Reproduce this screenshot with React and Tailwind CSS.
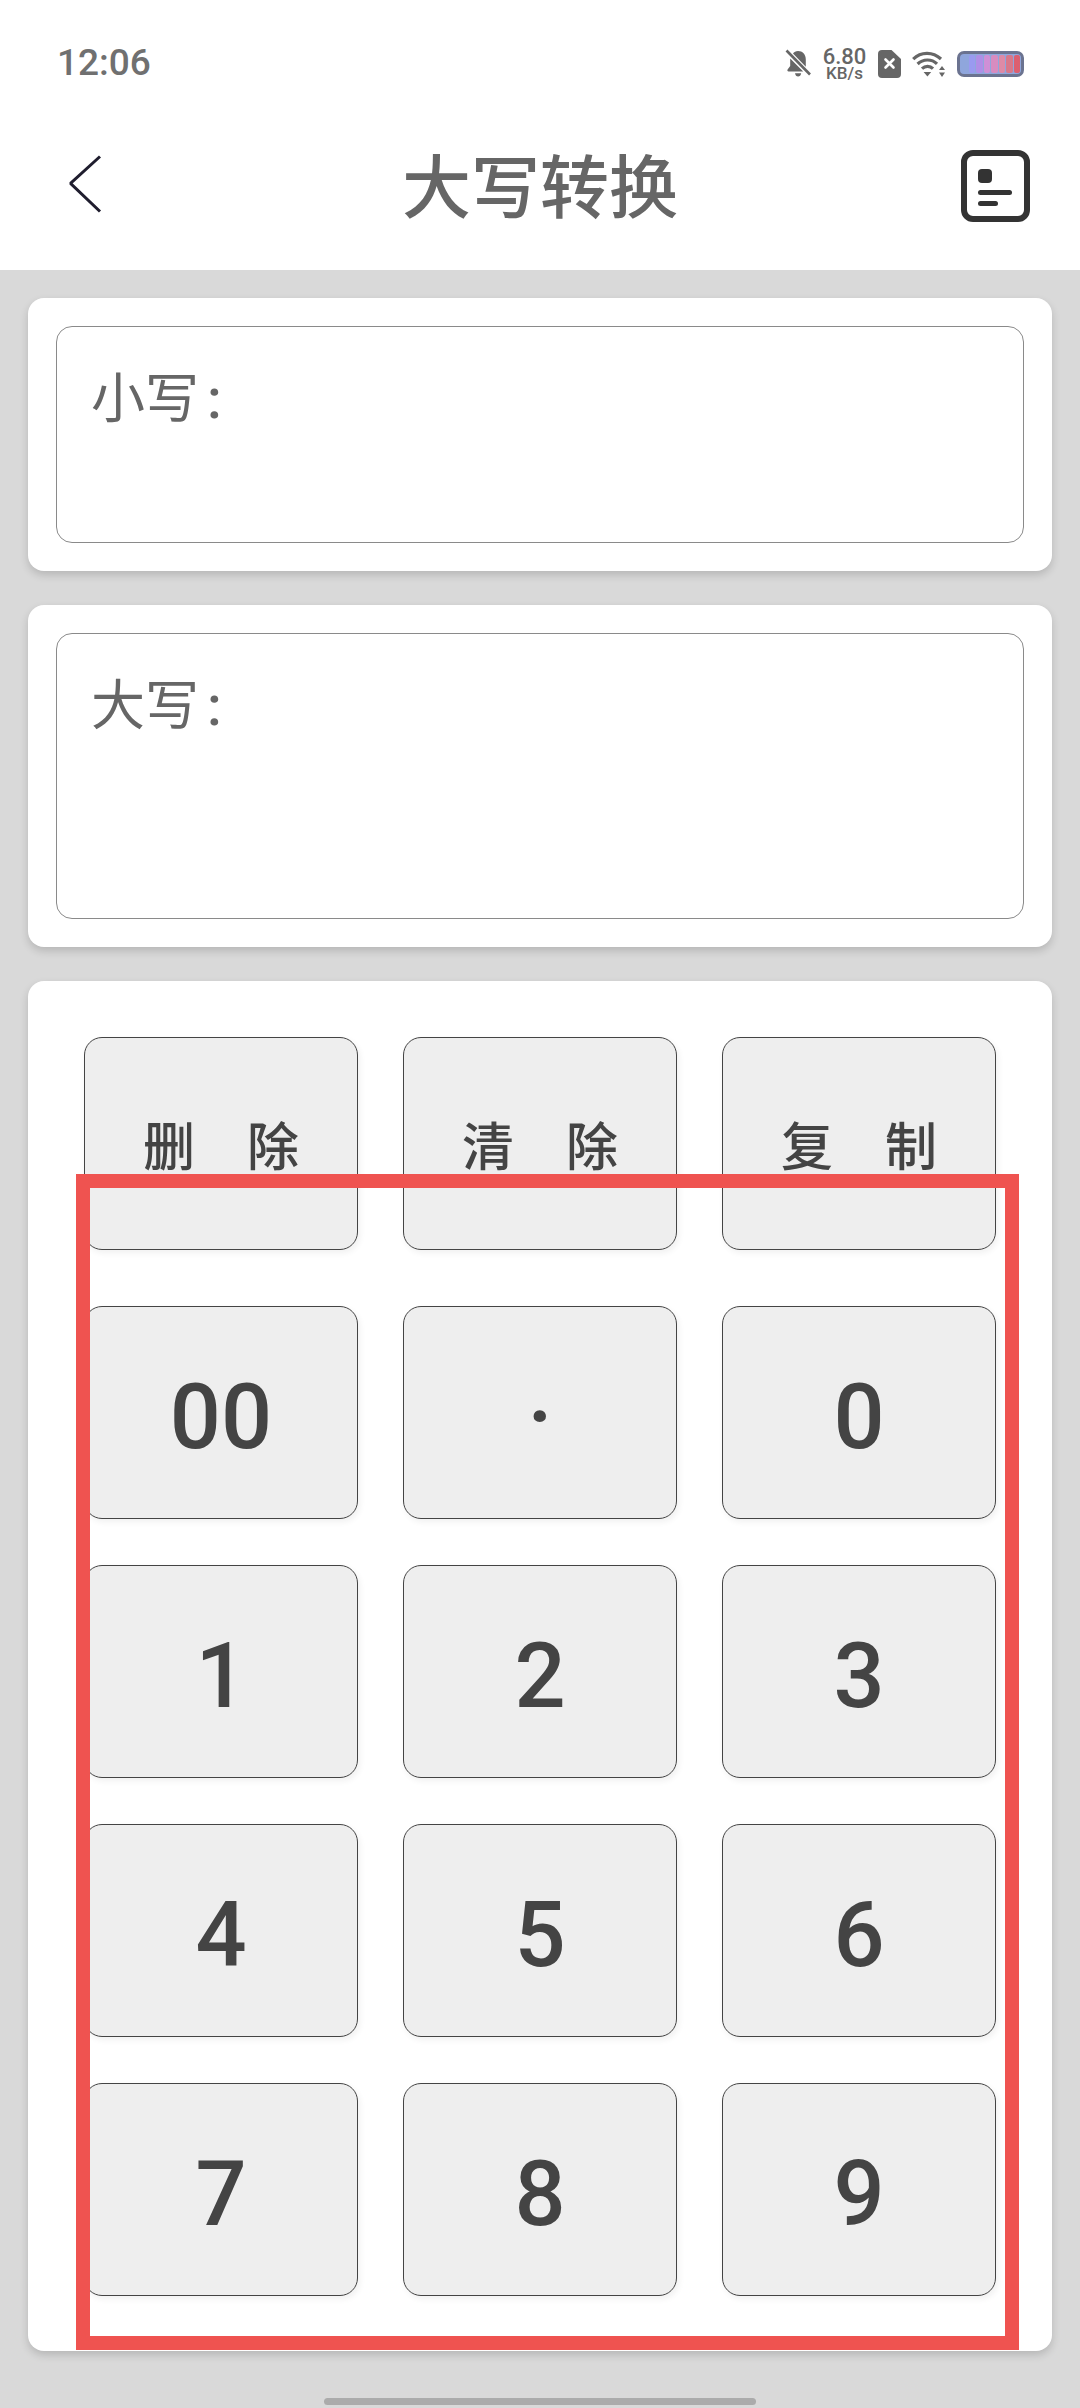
const cjk = { fontFamily: '"Noto Sans CJK SC", sans-serif' };
const latin = { fontFamily: 'Roboto, sans-serif' };

function Bell() {
  return (
    <svg width="26" height="30" viewBox="0 0 26 30" className="block">
      <path d="M5.2 9.5V17L2.6 20.6c-.6.9-.1 1.9 1 1.9h14.6zM8 4.6C9 3 10.8 2 13 2c4.5 0 7.8 3.4 7.8 8.4v7.3zM10 24.2h6.2c-.3 2-1.5 3.3-3.1 3.3s-2.8-1.3-3.1-3.3z" fill="#666" />
      <path d="M1.5 1.5L25 25.5" stroke="#666" strokeWidth="2.6" />
    </svg>
  );
}
function Sim() {
  return (
    <svg width="23" height="28" viewBox="0 0 23 28" className="block">
      <path d="M4 0h9.5L23 9v15a4 4 0 0 1-4 4H4a4 4 0 0 1-4-4V4a4 4 0 0 1 4-4z" fill="#666" />
      <path d="M7.5 9.5l8 8M15.5 9.5l-8 8" stroke="#fff" strokeWidth="2.6" strokeLinecap="round" />
    </svg>
  );
}
function Wifi() {
  return (
    <svg width="34" height="26" viewBox="0 0 34 26" className="block">
      <g fill="none" stroke="#666" strokeWidth="3.2">
        <path d="M1.2 8.2C9 .6 20.6.4 29 8" />
        <path d="M5.6 13C11 7.8 19.6 7.6 25 12.8" />
        <path d="M10 17.6c3.2-3 8-3 11 0" />
      </g>
      <path d="M11.6 21h7.6l-3.8 4.6z" fill="#666" />
      <path d="M30 15l3 4h-6zM30 26l-3-4.6h6z" fill="#666" />
    </svg>
  );
}
function Battery() {
  const bars = ["#8fa6dc", "#9a9af0", "#b08ee6", "#cf8fd6", "#d88cc0", "#de8aa6", "#d8788a", "#dc5f70"];
  return (
    <div className="flex h-[26px] w-[67px] items-stretch gap-[1px] rounded-[7px] border-[3px] border-[#6b7390] bg-[#8fa6dc] p-[1px]">
      {bars.map((c) => (
        <div key={c} className="flex-1 rounded-[2px]" style={{ backgroundColor: c }} />
      ))}
    </div>
  );
}

function Key({ label, small }) {
  return (
    <button
      className={
        small
          ? "flex h-[213px] items-center justify-center rounded-[18px] border border-[#444] bg-[#eeeeee] text-[52px] font-medium text-[#444] shadow-[2px_3px_6px_rgba(0,0,0,0.06)]"
          : "flex h-[213px] items-center justify-center rounded-[18px] border border-[#444] bg-[#eeeeee] pt-[9px] text-[90px] font-medium text-[#444] shadow-[2px_3px_6px_rgba(0,0,0,0.06)]"
      }
      style={small ? cjk : latin}
    >
      {label}
    </button>
  );
}

function OutBox({ label, h, cardH }) {
  return (
    <div className="rounded-[16px] bg-white p-[28px] shadow-[0_4px_8px_rgba(0,0,0,0.16)]" style={{ height: cardH }}>
      <div className="rounded-[16px] border border-[#8a8a8a] px-[34px] pt-[33px]" style={{ height: h }}>
        <span className="text-[54px] leading-[70px] text-[#666]" style={cjk}>{label}</span>
        <span className="ml-[8px] text-[56px] font-medium leading-[70px] text-[#666]" style={latin}>:</span>
      </div>
    </div>
  );
}

export default function App() {
  return (
    <div className="relative flex h-[2408px] w-[1080px] flex-col overflow-hidden bg-[#d9d9d9]">
      <header className="h-[270px] bg-white">
        <div className="flex h-[148px] items-start justify-between pl-[57px] pr-[56px] pt-[46px]">
          <span className="text-[37px] font-medium leading-[34px] text-[#707070]" style={latin}>12:06</span>
          <div className="flex items-center gap-[11px] pt-[1px]">
            <Bell />
            <div className="flex w-[45px] flex-col items-center text-[#666]" style={latin}>
              <span className="h-[19px] text-[22px] font-medium leading-[19px]">6.80</span>
              <span className="h-[15px] text-[17px] font-medium leading-[15px]">KB/s</span>
            </div>
            <Sim />
            <Wifi />
            <Battery />
          </div>
        </div>
        <div className="relative flex h-[78px] items-center justify-between pl-[68px] pr-[50px]">
          <svg width="34" height="58" viewBox="0 0 34 58" className="mt-[-6px] block">
            <path d="M32 1.5L3 28l0 .8L32 56.5" fill="none" stroke="#1f1d2e" strokeWidth="3" />
          </svg>
          <span className="absolute left-[402px] top-[-4px] text-[69px] font-medium leading-[78px] text-[#666]" style={cjk}>大写转换</span>
          <svg width="69" height="72" viewBox="0 0 69 72" className="mt-[-3px] block">
            <rect x="3" y="3" width="63" height="66" rx="9" fill="none" stroke="#333" strokeWidth="6" />
            <rect x="17" y="19" width="14" height="14" rx="4" fill="#333" />
            <rect x="17" y="40" width="34" height="5" rx="2.5" fill="#333" />
            <rect x="17" y="51" width="20" height="5" rx="2.5" fill="#333" />
          </svg>
        </div>
      </header>

      <main className="flex flex-col gap-[34px] px-[28px] pt-[28px]">
        <OutBox label="小写" h={217} cardH={273} />
        <OutBox label="大写" h={286} cardH={342} />
        <section className="h-[1370px] rounded-[16px] bg-white px-[56px] pt-[56px] shadow-[0_4px_8px_rgba(0,0,0,0.16)]">
          <div className="grid grid-cols-3 gap-x-[45px]">
            <Key small label="删　除" />
            <Key small label="清　除" />
            <Key small label="复　制" />
          </div>
          <div className="mt-[56px] grid grid-cols-3 gap-x-[45px] gap-y-[46px]">
            {["00", "·", "0", "1", "2", "3", "4", "5", "6", "7", "8", "9"].map((k) => (
              <Key key={k} label={k} />
            ))}
          </div>
        </section>
      </main>

      <div className="absolute left-[76px] top-[1174px] h-[1176px] w-[943px] border-[14px] border-[#ef5350]" />
      <div className="absolute bottom-[3px] left-[324px] h-[7px] w-[432px] rounded-full bg-[#ababab]" />
    </div>
  );
}
